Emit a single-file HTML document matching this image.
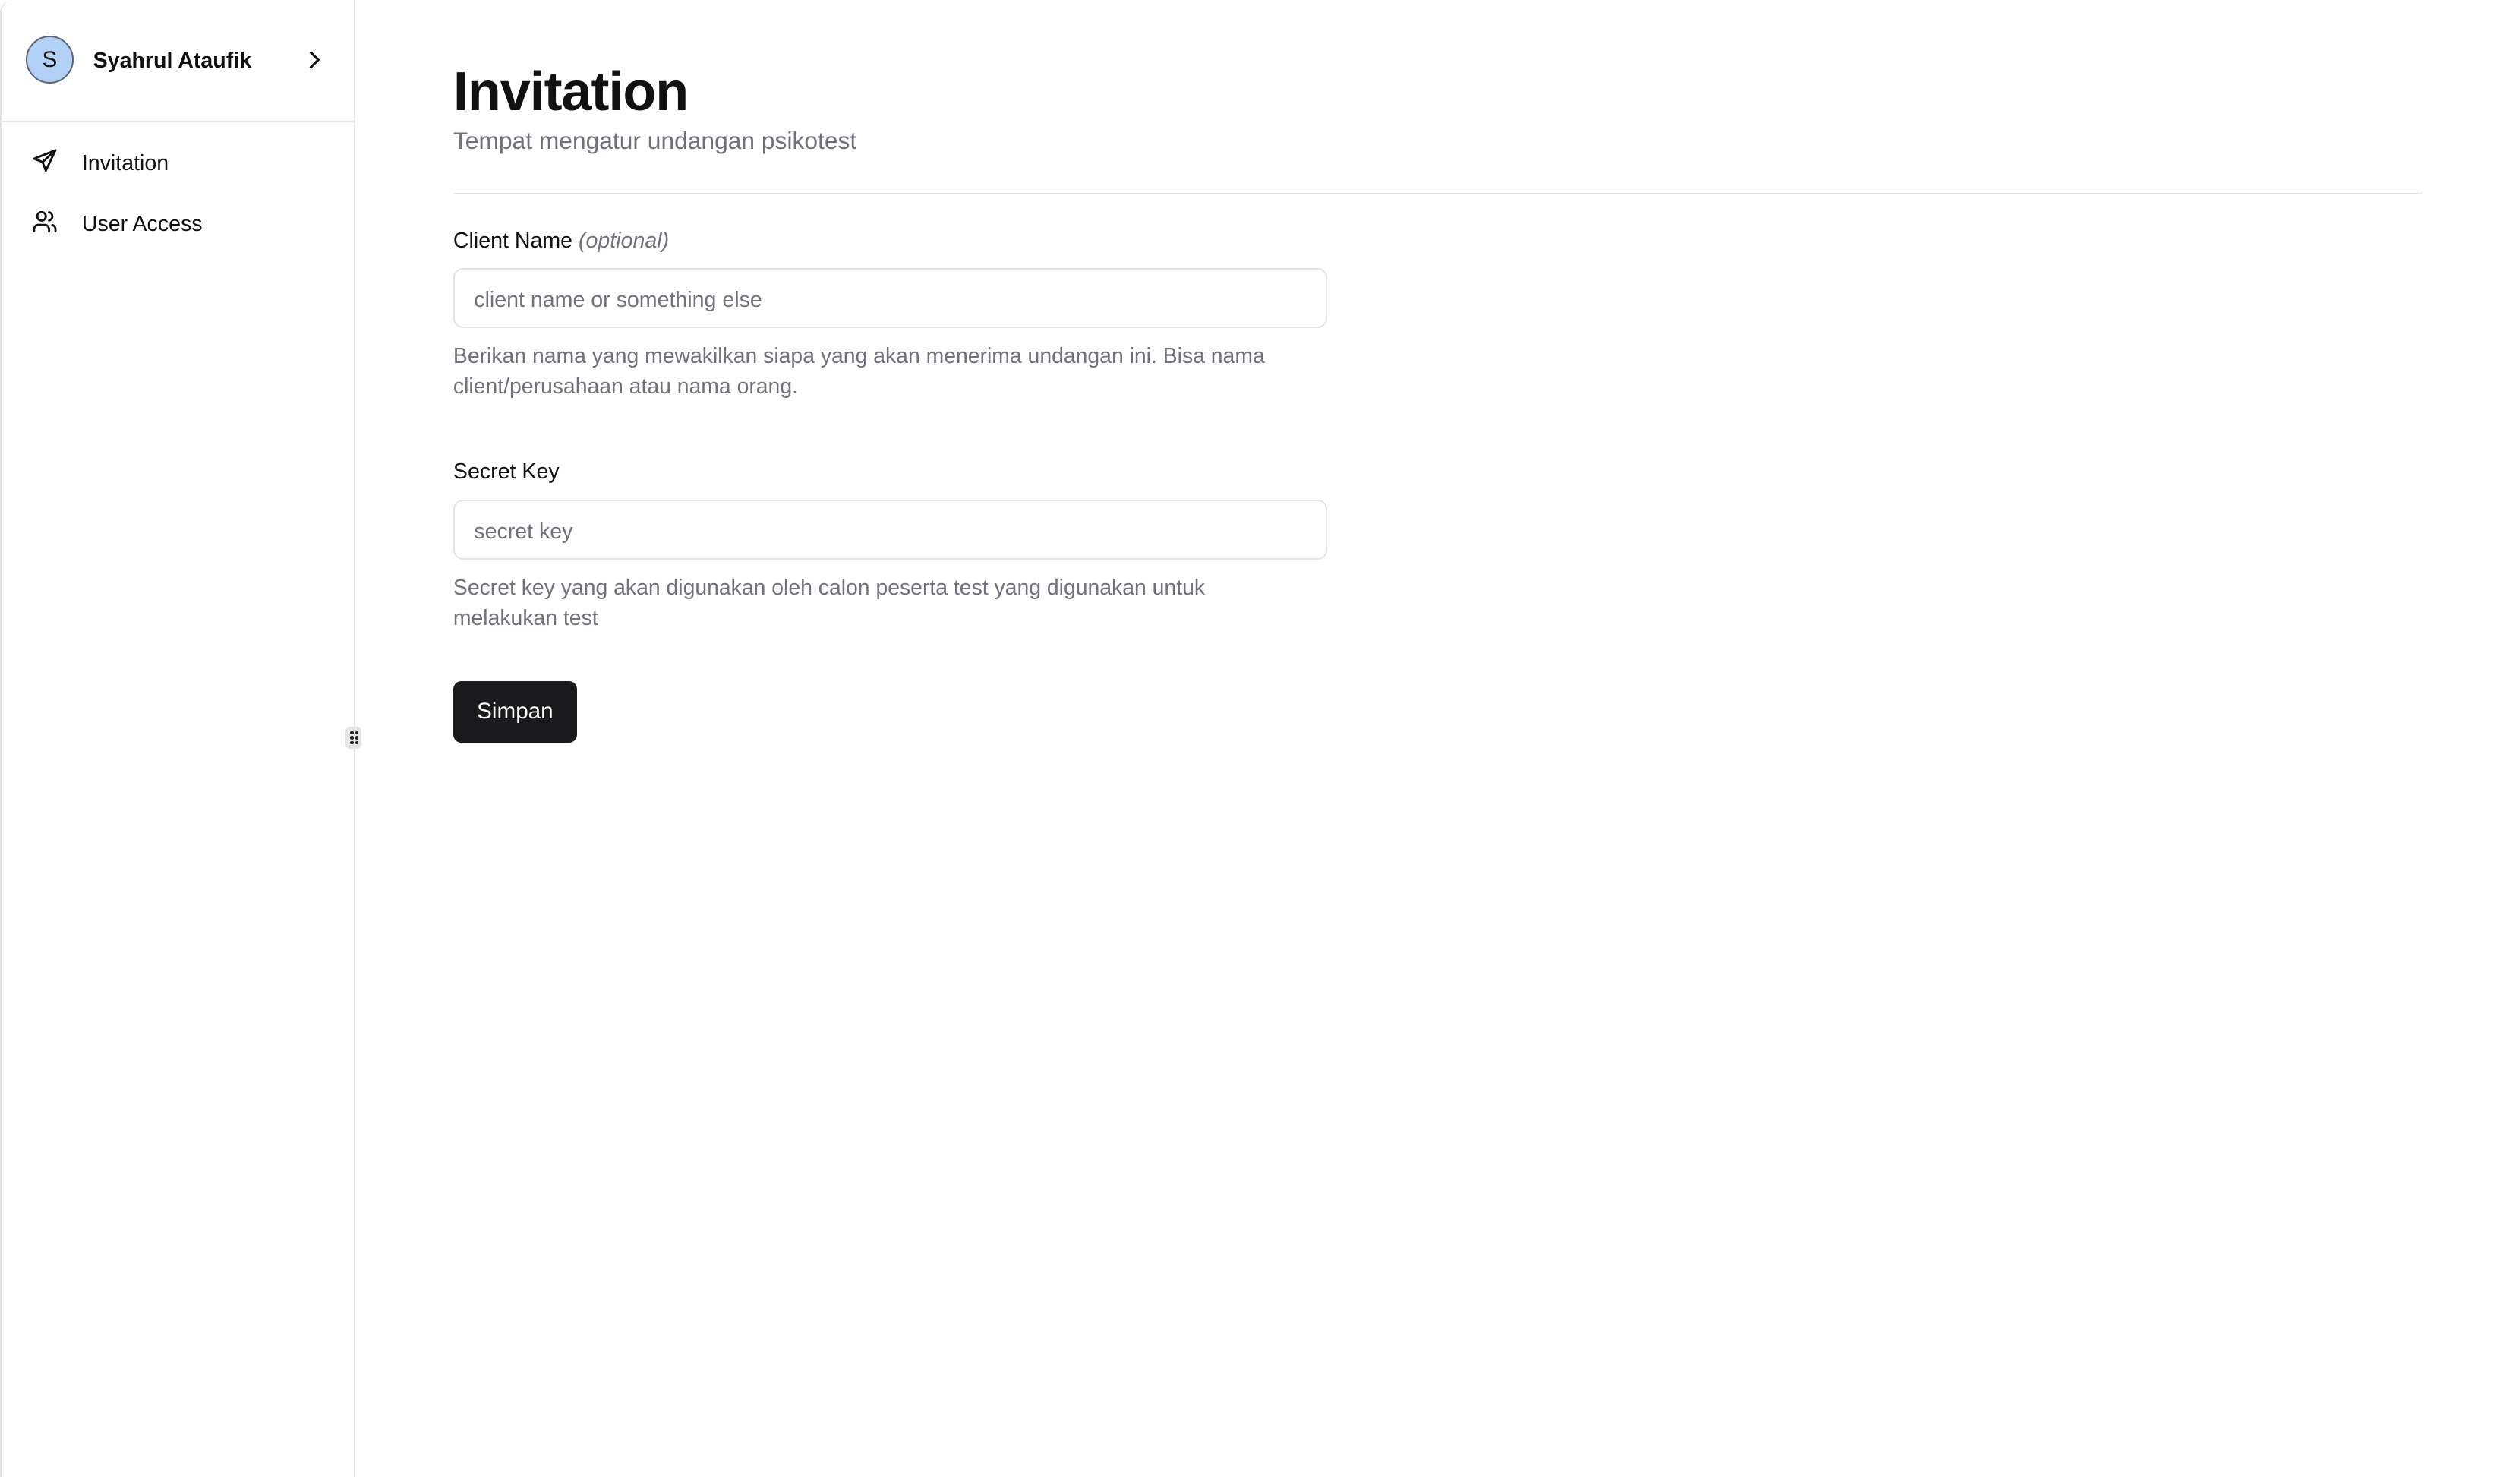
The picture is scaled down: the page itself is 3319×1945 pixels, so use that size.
<!DOCTYPE html>
<html><head><meta charset="utf-8"><style>
html,body{margin:0;padding:0;background:#fff;overflow:hidden;}
body{width:3319px;height:1945px;overflow:hidden;font-family:"Liberation Sans",Arial,sans-serif;}
#w{zoom:2.11671;width:1568px;height:919px;position:relative;color:#111;overflow:hidden;}
.side{position:absolute;left:0;top:0;width:221px;height:925px;border:1px solid #e4e4e7;border-radius:8px 0 0 0;box-sizing:border-box;border-top:none;}
.user{height:75px;border-bottom:1px solid #e4e4e7;position:relative;}
.av{position:absolute;left:15px;top:22px;width:28px;height:28px;border-radius:50%;background:#b3d0f7;border:1px solid #5b6474;text-align:center;line-height:28px;font-size:14px;}
.un{position:absolute;left:57px;top:30px;font-size:13.5px;font-weight:bold;}
.chev{position:absolute;left:187px;top:30px;}
.nav{position:absolute;left:50px;font-size:13.5px;}
.ic{position:absolute;left:19px;}
.handle{position:absolute;left:215px;top:452px;width:10px;height:14px;background:#e4e4e7;border-radius:3px;}
.handle i{position:absolute;width:2px;height:2px;background:#222;border-radius:1px;}
.main{position:absolute;left:282px;top:0;width:1225px;}
h1{margin:0;position:absolute;top:38px;font-size:34px;font-weight:bold;letter-spacing:-0.5px;}
.sub{position:absolute;top:79px;font-size:15px;color:#71717a;}
.hr{position:absolute;top:120px;left:0;width:1225px;height:1px;background:#e4e4e7;}
.lbl{position:absolute;font-size:13.5px;}
.lbl em{color:#71717a;}
.in{position:absolute;left:0;width:544px;height:37px;border:1px solid #e4e4e7;border-radius:6px;box-sizing:border-box;font-size:13.5px;color:#71717a;padding:11px 12px;}
.help{position:absolute;width:520px;font-size:13.4px;color:#71717a;line-height:19px;}
.btn{position:absolute;top:424px;left:0;width:77px;height:38px;background:#1a1a1c;border-radius:5px;color:#fff;font-size:14px;text-align:center;line-height:38px;}
</style></head><body><div id="w">
<div class="side">
 <div class="user"><div class="av">S</div><div class="un">Syahrul Ataufik</div>
 <svg class="chev" width="14" height="14" viewBox="0 0 14 14"><path d="M5 2l5 5-5 5" fill="none" stroke="#111" stroke-width="1.5"/></svg></div>
 <svg class="ic" style="top:92px" width="16" height="16" viewBox="0 0 24 24" fill="none" stroke="#111" stroke-width="2" stroke-linejoin="round"><path d="M22 2L2 10l8 3 3 8z M22 2L10 13"/></svg>
 <div class="nav" style="top:94px">Invitation</div>
 <svg class="ic" style="top:130px" width="16" height="16" viewBox="0 0 24 24" fill="none" stroke="#111" stroke-width="2" stroke-linecap="round"><circle cx="9" cy="7" r="4"/><path d="M2 21v-2a4 4 0 0 1 4-4h6a4 4 0 0 1 4 4v2M16 3.1a4 4 0 0 1 0 7.8M22 21v-2a4 4 0 0 0-3-3.9"/></svg>
 <div class="nav" style="top:132px">User Access</div>
</div>
<div class="handle"><i style="left:3px;top:3px"></i><i style="left:6px;top:3px"></i><i style="left:3px;top:6px"></i><i style="left:6px;top:6px"></i><i style="left:3px;top:9px"></i><i style="left:6px;top:9px"></i></div>
<div class="main">
 <h1>Invitation</h1>
 <div class="sub">Tempat mengatur undangan psikotest</div>
 <div class="hr"></div>
 <div class="lbl" style="top:142px">Client Name <em>(optional)</em></div>
 <div class="in" style="top:167px">client name or something else</div>
 <div class="help" style="top:212px">Berikan nama yang mewakilkan siapa yang akan menerima undangan ini. Bisa nama client/perusahaan atau nama orang.</div>
 <div class="lbl" style="top:286px">Secret Key</div>
 <div class="in" style="top:311px">secret key</div>
 <div class="help" style="top:356px">Secret key yang akan digunakan oleh calon peserta test yang digunakan untuk melakukan test</div>
 <div class="btn">Simpan</div>
</div>
</div></body></html>
